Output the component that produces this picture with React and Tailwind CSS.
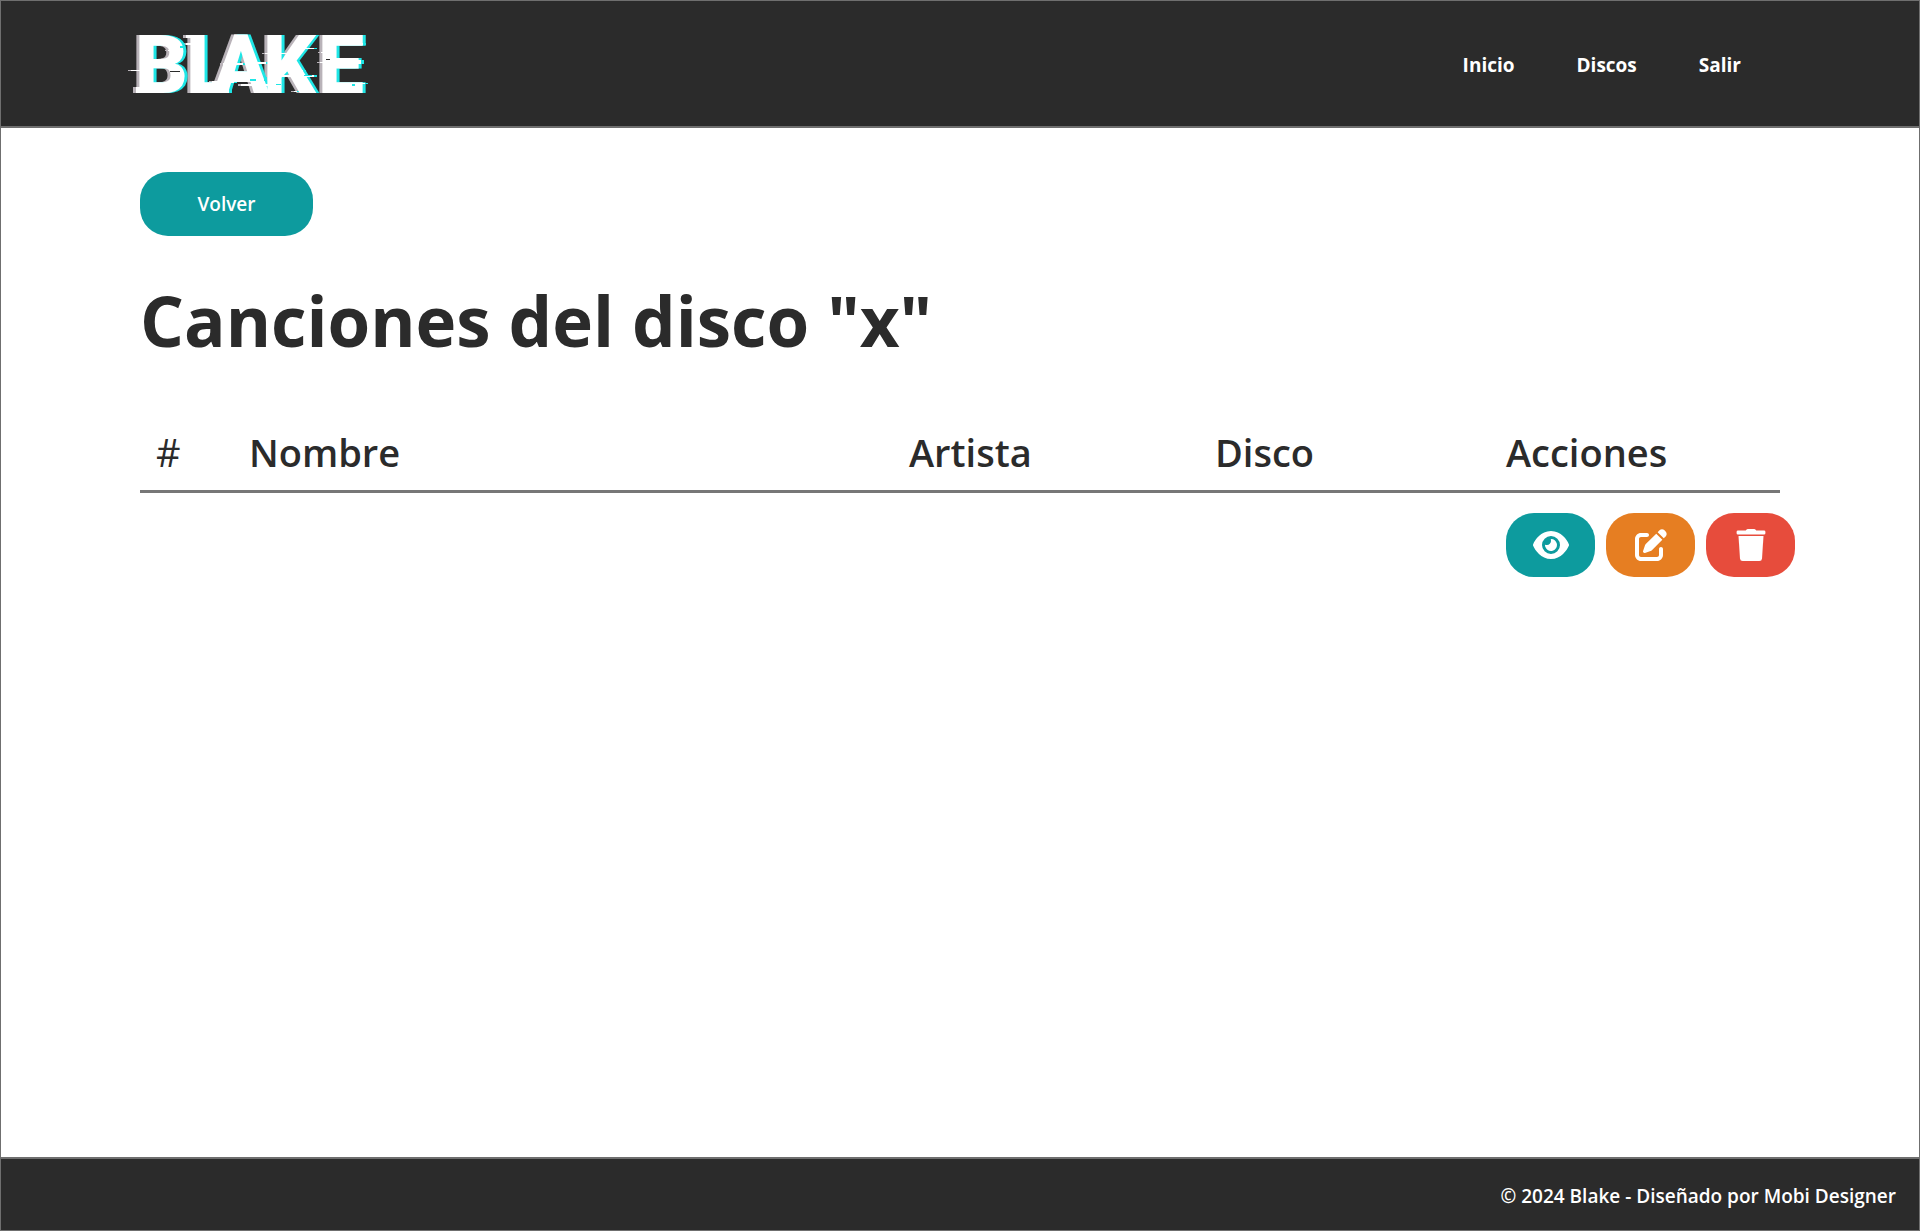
import React from "react";
import { FaEye, FaPenToSquare } from "react-icons/fa6";

const links = ["Inicio", "Discos", "Salir"];

// Glitch slivers of the logo: x, y, width, height
const whiteSlivers = [
  [5, 46, 22, 1], [10, 63, 10, 6], [60, 19, 18, 2], [97, 39, 20, 2],
  [86, 57, 22, 2], [139, 29, 36, 1], [142, 51, 46, 2], [176, 24, 12, 1],
  [224, 19, 13, 2], [222, 36, 13, 4], [224, 59, 15, 1], [195, 28, 7, 1],
  [194, 38, 8, 1], [115, 60, 28, 2], [159, 46, 18, 1], [168, 67, 3, 1],
  [44, 56, 12, 1], [42, 26, 14, 1], [120, 38, 20, 2], [60, 11, 10, 3],
];
const cyanSlivers = [
  [124, 55, 6, 2], [138, 53, 3, 4], [150, 60, 5, 1],
  [226, 60, 3, 2], [54, 22, 4, 2], [178, 51, 8, 1],
];
const darkSlivers = [
  [109, 59, 12, 1], [200, 35, 4, 1], [44, 47, 10, 1],
];

function Slivers({ items, className }) {
  return (
    <g className={className}>
      {items.map(([x, y, w, h]) => (
        <rect key={`${x}-${y}`} x={x} y={y} width={w} height={h} />
      ))}
    </g>
  );
}

function Logo() {
  return (
    <svg
      width="248"
      height="100"
      viewBox="0 -10 248 100"
      role="img"
      aria-label="Blake"
      className="overflow-visible"
    >
      <g className="[filter:drop-shadow(3px_0_0_#1ee6e6)_drop-shadow(-3px_0_0_#b9b3b9)]">
        <text
          x="9 60 87 137 192"
          y="69"
          className="fill-white font-['Roboto',sans-serif] text-[82px] font-black"
        >
          BLAKE
        </text>
        <Slivers items={whiteSlivers} className="fill-white" />
      </g>
      <Slivers items={cyanSlivers} className="fill-[#1ee6e6]" />
      <Slivers items={darkSlivers} className="fill-[#2b2b2b]" />
    </svg>
  );
}

function TrashIcon() {
  return (
    <svg width="30" height="32" viewBox="0 0 30 32" fill="currentColor" aria-hidden="true">
      <path d="M2 1.500h7q.8 0 1.200-.5Q10.700 0 12 0h6q1.300 0 1.800 1q.400.500 1.200.500h7q1.400 0 1.400 1.300v1.400q0 1.300-1.400 1.300H2Q.600 5.500.600 4.200V2.800Q.600 1.500 2 1.500z" />
      <path d="M2.500 7h25l-1.500 22.500q-.200 2.500-2.700 2.500H6.700q-2.500 0-2.700-2.500z" />
    </svg>
  );
}

function ActionButton({ label, color, children }) {
  return (
    <button
      type="button"
      aria-label={label}
      className={`flex h-16 w-[89px] shrink-0 items-center justify-center rounded-[28px] text-white ${color}`}
    >
      {children}
    </button>
  );
}

export default function App() {
  return (
    <div className="flex min-h-screen flex-col border border-[#6f6f6f] bg-white font-['Open_Sans','Noto_Sans',sans-serif] text-[#2b2b2b]">
      <header className="flex h-[127px] items-center justify-between border-b-2 border-[#6f6f6f] bg-[#2b2b2b] pr-[178px] pl-[125px]">
        <a href="#">
          <Logo />
        </a>
        <nav className="flex gap-[62px] pt-1 text-[19px] font-bold text-white">
          {links.map((l) => (
            <a key={l} href="#">
              {l}
            </a>
          ))}
        </nav>
      </header>

      <main className="flex-1 px-[139px] pt-11">
        <button
          type="button"
          className="h-16 w-[173px] rounded-[28px] bg-[#0d9b9e] text-[19px] font-semibold text-white"
        >
          Volver
        </button>
        <h1 className="mt-9 text-[69px] leading-[96px] font-bold">Canciones del disco "x"</h1>

        <table className="mt-14 w-full table-fixed text-left">
          <colgroup>
            <col className="w-[93px]" />
            <col />
            <col className="w-[306px]" />
            <col className="w-[291px]" />
            <col className="w-[290px]" />
          </colgroup>
          <thead>
            <tr className="border-b-3 border-[#777777] text-[38px] leading-[56px]">
              <th className="pb-2.5 pl-4 font-normal">#</th>
              <th className="pb-2.5 pl-4 font-semibold">Nombre</th>
              <th className="pb-2.5 pl-4 font-semibold">Artista</th>
              <th className="pb-2.5 pl-4 font-semibold">Disco</th>
              <th className="pb-2.5 pl-4 font-semibold">Acciones</th>
            </tr>
          </thead>
          <tbody>
            <tr>
              <td />
              <td />
              <td />
              <td />
              <td className="pt-5 pl-4">
                <div className="flex gap-[11px]">
                  <ActionButton label="Ver" color="bg-[#0d9b9e]">
                    <FaEye className="h-8 w-9" />
                  </ActionButton>
                  <ActionButton label="Editar" color="bg-[#e67e22]">
                    <FaPenToSquare className="size-8" />
                  </ActionButton>
                  <ActionButton label="Eliminar" color="bg-[#e74c3c]">
                    <TrashIcon />
                  </ActionButton>
                </div>
              </td>
            </tr>
          </tbody>
        </table>
      </main>

      <footer className="flex h-[73px] items-center justify-end border-t-2 border-[#6f6f6f] bg-[#2b2b2b] pt-1 pr-[23px] text-[19px] font-semibold text-white">
        <p>© 2024 Blake - Diseñado por Mobi Designer</p>
      </footer>
    </div>
  );
}
